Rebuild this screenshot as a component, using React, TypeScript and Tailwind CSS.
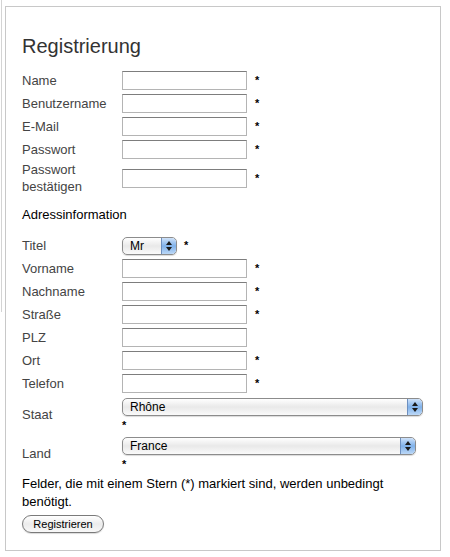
import type { ReactNode } from "react";

const font = { fontFamily: '"Liberation Sans", Arial, Helvetica, sans-serif' };

function Star() {
  return <span className="text-[11px] font-bold leading-none text-black">*</span>;
}

function TextInput() {
  return (
    <input
      type="text"
      className="h-[19px] w-[125px] border border-[#b4b4b4] border-t-[#7d7d7d] bg-white px-1 text-[12px] outline-none"
    />
  );
}

function Stepper() {
  return (
    <span className="flex h-full w-[15px] flex-col items-center justify-center gap-[2px] rounded-r-[4px] border-l border-[#6d8fbf] bg-gradient-to-b from-[#cfe2f9] via-[#7fb1ea] to-[#bcd8f7]">
      <svg width="6" height="4" viewBox="0 0 6 4">
        <path d="M3 0 L6 4 L0 4 Z" fill="#1a1a1a" />
      </svg>
      <svg width="6" height="4" viewBox="0 0 6 4">
        <path d="M0 0 L6 0 L3 4 Z" fill="#1a1a1a" />
      </svg>
    </span>
  );
}

function Select({ value, width }: { value: string; width: string }) {
  return (
    <div
      className={`flex h-[18px] ${width} items-stretch overflow-hidden rounded-[5px] border border-[#8c8c8c] bg-gradient-to-b from-white via-[#e9e9e9] to-[#fafafa] shadow-[0_1px_1px_rgba(0,0,0,0.15)]`}
    >
      <span className="flex flex-1 items-center pl-[7px] text-[12px] leading-none text-black">
        {value}
      </span>
      <Stepper />
    </div>
  );
}

function Row({
  label,
  children,
  required = false,
}: {
  label: ReactNode;
  children: ReactNode;
  required?: boolean;
}) {
  return (
    <div className="flex h-[23px] items-center">
      <div className="w-[100px] text-[13px] leading-[17px] text-[#444]">{label}</div>
      {children}
      {required && (
        <span className="ml-[8px] -mt-[3px]">
          <Star />
        </span>
      )}
    </div>
  );
}

function SelectRow({ label, value, width }: { label: string; value: string; width: string }) {
  return (
    <div className="flex h-[39px] items-center">
      <div className="w-[100px] text-[13px] text-[#444]">{label}</div>
      <div className="flex h-full flex-col pt-[3px]">
        <Select value={value} width={width} />
        <div className="flex h-[18px] items-center">
          <Star />
        </div>
      </div>
    </div>
  );
}

export default function App() {
  return (
    <div className="flex h-[557px] w-[450px] bg-white" style={font}>
      <div className="ml-[1px] h-[312px] w-px bg-[#d4d4d4]" />
      <div className="ml-[3px] mt-[6px] h-[545px] w-[436px] border border-[#c8c8c8] pl-[16px]">
        <h1 className="mt-[27px] text-[20px] leading-[24px] text-[#333]">Registrierung</h1>

        <div className="mt-[11px]">
          <Row label="Name" required>
            <TextInput />
          </Row>
          <Row label="Benutzername" required>
            <TextInput />
          </Row>
          <Row label="E-Mail" required>
            <TextInput />
          </Row>
          <Row label="Passwort" required>
            <TextInput />
          </Row>
          <div className="flex h-[34px] items-center">
            <div className="w-[100px] text-[13px] leading-[17px] text-[#444]">
              Passwort
              <br />
              bestätigen
            </div>
            <TextInput />
            <span className="ml-[8px] -mt-[3px]">
              <Star />
            </span>
          </div>
        </div>

        <p className="mt-[11px] text-[13px] leading-[17px] text-black">Adressinformation</p>

        <div className="mt-[11px]">
          <Row label="Titel">
            <Select value="Mr" width="w-[55px]" />
            <span className="ml-[7px] -mt-[3px]">
              <Star />
            </span>
          </Row>
          <Row label="Vorname" required>
            <TextInput />
          </Row>
          <Row label="Nachname" required>
            <TextInput />
          </Row>
          <Row label="Straße" required>
            <TextInput />
          </Row>
          <Row label="PLZ">
            <TextInput />
          </Row>
          <Row label="Ort" required>
            <TextInput />
          </Row>
          <Row label="Telefon" required>
            <TextInput />
          </Row>
          <SelectRow label="Staat" value="Rhône" width="w-[301px]" />
          <SelectRow label="Land" value="France" width="w-[294px]" />
        </div>

        <p className="mt-[2px] w-[400px] text-[13px] leading-[18px] text-black">
          Felder, die mit einem Stern (*) markiert sind, werden unbedingt benötigt.
        </p>

        <button
          type="button"
          className="mt-[4px] flex h-[18px] w-[82px] items-center justify-center rounded-full border border-[#7a7a7a] bg-gradient-to-b from-white via-[#ececec] to-[#f8f8f8] text-[11px] leading-none text-black shadow-[0_1px_1px_rgba(0,0,0,0.15)]"
        >
          Registrieren
        </button>
      </div>
    </div>
  );
}
